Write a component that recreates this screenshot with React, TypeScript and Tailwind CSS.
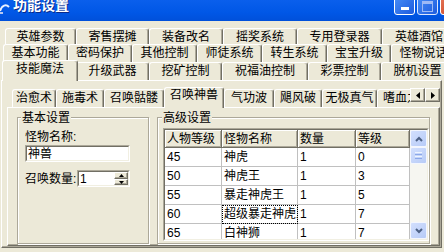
import React from 'react';

const row1 = [
  { t: '英雄参数', w: 'w-[71px]' },
  { t: '寄售摆摊', w: 'w-[73px]' },
  { t: '装备改名', w: 'w-[74px]' },
  { t: '摇奖系统', w: 'w-[74px]' },
  { t: '专用登录器', w: 'w-[85px]' },
  { t: '英雄酒馆', w: 'w-[74px]' },
];
const row2 = [
  { t: '基本功能', w: 'w-[65px]' },
  { t: '密码保护', w: 'w-[64px]' },
  { t: '其他控制', w: 'w-[65px]' },
  { t: '师徒系统', w: 'w-[65px]' },
  { t: '转生系统', w: 'w-[65px]' },
  { t: '宝宝升级', w: 'w-[64px]' },
  { t: '怪物说话', w: 'w-[65px]' },
];
const row3 = [
  { t: '升级武器', w: 'w-[73px]' },
  { t: '挖矿控制', w: 'w-[73px]' },
  { t: '祝福油控制', w: 'w-[86px]' },
  { t: '彩票控制', w: 'w-[73px]' },
  { t: '脱机设置', w: 'w-[73px]' },
];
const innerTabs = [
  { t: '治愈术', w: 'w-[44px]' },
  { t: '施毒术', w: 'w-[48px]' },
  { t: '召唤骷髅', w: 'w-[60px]' },
  { t: '召唤神兽', w: 'w-[60px]', sel: true },
  { t: '气功波', w: 'w-[50px]' },
  { t: '飓风破', w: 'w-[48px]' },
  { t: '无极真气', w: 'w-[55px]' },
  { t: '嗜血之力', w: 'w-[60px]' },
];

const tabBase =
  'shrink-0 flex justify-center bg-[#ECE9D8] border-l border-t border-r border-l-white border-t-white border-r-[#716F64] rounded-t-[3px] shadow-[inset_-1px_0_0_#ACA899] whitespace-nowrap overflow-hidden';

const cols = ['w-[57px]', 'w-[76px]', 'w-[58px]', 'w-[54px]'];
const headers = ['人物等级', '怪物名称', '数量', '等级'];
const rows = [
  ['45', '神虎', '1', '0'],
  ['50', '神虎王', '1', '3'],
  ['55', '暴走神虎王', '1', '5'],
  ['60', '超级暴走神虎王', '1', '7'],
  ['65', '白神狮', '1', '7'],
];

function Sunken({
  className,
  innerClassName,
  children,
}: {
  className: string;
  innerClassName: string;
  children?: React.ReactNode;
}) {
  return (
    <div className={`shrink-0 border border-t-[#ACA899] border-l-[#ACA899] border-r-white border-b-white ${className}`}>
      <div className={`w-full h-full border border-t-[#716F64] border-l-[#716F64] border-r-[#F1EFE2] border-b-[#F1EFE2] ${innerClassName}`}>
        {children}
      </div>
    </div>
  );
}

function Raised({ className, children }: { className: string; children?: React.ReactNode }) {
  return (
    <div
      className={`shrink-0 bg-[#ECE9D8] border border-t-white border-l-white border-r-[#716F64] border-b-[#716F64] shadow-[inset_-1px_-1px_0_#ACA899] flex items-center justify-center ${className}`}
    >
      {children}
    </div>
  );
}

function Chevron({ up }: { up: boolean }) {
  return (
    <svg width="8" height="6" viewBox="0 0 8 6">
      <polyline
        points={up ? '1,5 4,2 7,5' : '1,1 4,4 7,1'}
        fill="none"
        stroke="#4D6185"
        strokeWidth="2"
      />
    </svg>
  );
}

function LunaBtn({ className, children }: { className: string; children?: React.ReactNode }) {
  return (
    <div
      className={`shrink-0 rounded-[2px] border border-[#F3F6FE] bg-[linear-gradient(135deg,#D2DFFD,#B7CBF7)] flex items-center justify-center ${className}`}
    >
      {children}
    </div>
  );
}

export default function App() {
  return (
    <div className="w-[444px] h-[252px] overflow-hidden bg-[#ECE9D8] flex flex-col font-['Liberation_Sans','Noto_Sans_CJK_SC',sans-serif] text-[12px] leading-[14px] text-black select-none">
      {/* Title bar */}
      <div className="h-[21px] shrink-0 flex items-start bg-[linear-gradient(to_bottom,#0A5FEC,#0057E6_60%,#0050DA)]">
        <svg className="shrink-0 mt-[2px]" width="10" height="13" viewBox="0 0 10 13">
          <path d="M0 9 C2 3, 6 2, 9 5" fill="none" stroke="#EAF0FF" strokeWidth="2" />
          <path d="M0 11 L3 11" stroke="#B8C8F0" strokeWidth="2" />
        </svg>
        <span className="ml-[3px] -mt-[3px] text-[14px] leading-[16px] font-bold text-white [text-shadow:1px_1px_0_#0A2A8A] whitespace-nowrap">
          功能设置
        </span>
        <div className="ml-auto -mt-[6px] -mr-[17px] flex gap-[2px]">
          <div className="w-[21px] h-[21px] rounded-[3px] border border-white bg-[linear-gradient(135deg,#4A90F8,#1D5BDE)] flex items-end justify-center pb-[4px]">
            <div className="w-[8px] h-[3px] bg-white" />
          </div>
          <div className="w-[21px] h-[21px] rounded-[3px] border border-[#DCE6FC] bg-[linear-gradient(135deg,#4A90F8,#1D5BDE)] flex items-end justify-center pb-[2px]">
            <div className="w-[11px] h-[11px] border border-t-[3px] border-[#9DB9F5]" />
          </div>
          <div className="w-[21px] h-[21px] rounded-[3px] border border-white bg-[linear-gradient(135deg,#E77A5C,#C63A18)]" />
        </div>
      </div>

      <div className="flex flex-col pt-[7px]">
        {/* Tab row 1 */}
        <div className="flex h-[16px] pl-[5px] items-start">
          {row1.map((r) => (
            <div key={r.t} className={`${tabBase} ${r.w} h-[16px] pt-[1px]`}>
              {r.t}
            </div>
          ))}
        </div>
        {/* Tab row 2 */}
        <div className="flex h-[18px] pl-[3px] items-start">
          {row2.map((r) => (
            <div key={r.t} className={`${tabBase} ${r.w} h-[18px] pt-[1px]`}>
              {r.t}
            </div>
          ))}
        </div>
        {/* Tab row 3 */}
        <div className="flex h-[18px] pl-[4px] items-start">
          <div className={`${tabBase} relative z-10 w-[76px] h-[21px] -mt-[2px] -ml-[2px] -mr-[2px] pt-[1px]`}>
            技能魔法
          </div>
          {row3.map((r) => (
            <div key={r.t} className={`${tabBase} ${r.w} h-[18px] pt-[1px]`}>
              {r.t}
            </div>
          ))}
        </div>

        {/* Outer panel */}
        <div className="ml-[1px] w-[441px] h-[168px] shrink-0 border border-t-white border-l-white border-r-[#716F64] border-b-[#716F64] shadow-[inset_-1px_-1px_0_#ACA899] pt-[6px] pl-[5px]">
          <div className="w-[433px] flex flex-col">
            {/* inner tab strip */}
            <div className="flex h-[20px]">
              <div className="relative z-10 w-[412px] h-[21px] overflow-hidden flex items-start pl-[5px]">
                {innerTabs.map((r) =>
                  r.sel ? (
                    <div key={r.t} className={`${tabBase} ${r.w} h-[21px] pt-[0px]`}>
                      {r.t}
                    </div>
                  ) : (
                    <div key={r.t} className={`${tabBase} ${r.w} h-[18px] mt-[2px] pt-[1px]`}>
                      {r.t}
                    </div>
                  )
                )}
              </div>
              <div className="flex mt-[1px]">
                <Raised className="w-[15px] h-[14px]">
                  <svg width="4" height="7" viewBox="0 0 4 7">
                    <polygon points="4,0 4,7 0,3.5" fill="black" />
                  </svg>
                </Raised>
                <Raised className="w-[15px] h-[14px]">
                  <svg width="4" height="7" viewBox="0 0 4 7">
                    <polygon points="0,0 0,7 4,3.5" fill="black" />
                  </svg>
                </Raised>
              </div>
            </div>

            {/* inner panel */}
            <div className="h-[139px] shrink-0 border border-t-white border-l-white border-r-[#716F64] border-b-[#716F64] shadow-[inset_-1px_-1px_0_#ACA899] flex items-start pl-[9px]">
              {/* group 1 */}
              <div className="relative shrink-0 w-[132px] h-[127px] mt-[9px] border border-[#ACA899] shadow-[inset_1px_1px_0_#fff,1px_1px_0_#fff] pl-[7px] pt-[12px] flex flex-col">
                <span className="absolute -top-[7px] left-[3px] px-[1px] bg-[#ECE9D8] whitespace-nowrap">基本设置</span>
                <div className="h-[14px] whitespace-nowrap">怪物名称:</div>
                <Sunken className="mt-[1px] w-[105px] h-[17px] bg-white" innerClassName="flex items-center pl-[1px]">
                  神兽
                </Sunken>
                <div className="mt-[8px] flex items-center h-[17px]">
                  <span className="w-[52px] shrink-0 whitespace-nowrap">召唤数量:</span>
                  <Sunken className="w-[53px] h-[17px] bg-white" innerClassName="flex items-center pl-[1px]">
                    <span className="flex-1">1</span>
                    <div className="w-[14px] h-full flex flex-col">
                      <Raised className="w-[14px] h-[7px]">
                        <svg width="5" height="3" viewBox="0 0 5 3">
                          <polygon points="0,3 5,3 2.5,0" fill="black" />
                        </svg>
                      </Raised>
                      <Raised className="w-[14px] h-[6px]">
                        <svg width="5" height="3" viewBox="0 0 5 3">
                          <polygon points="0,0 5,0 2.5,3" fill="black" />
                        </svg>
                      </Raised>
                    </div>
                  </Sunken>
                </div>
              </div>

              {/* group 2 */}
              <div className="relative shrink-0 w-[273px] h-[127px] ml-[8px] mt-[9px] border border-[#ACA899] shadow-[inset_1px_1px_0_#fff,1px_1px_0_#fff] pl-[5px] pt-[10px] flex flex-col">
                <span className="absolute -top-[7px] left-[4px] px-[1px] bg-[#ECE9D8] whitespace-nowrap">高级设置</span>
                <Sunken className="w-[266px] h-[113px]" innerClassName="flex">
                  <div className="w-[245px] h-full overflow-hidden flex flex-col bg-white">
                    <div className="flex h-[18px] shrink-0">
                      {headers.map((h, i) => (
                        <div
                          key={h}
                          className={`${cols[i]} shrink-0 h-full pl-[2px] flex items-center bg-[#ECE9D8] border-r border-b border-r-[#716F64] border-b-[#716F64] shadow-[inset_1px_1px_0_#fff,inset_-1px_-1px_0_#ACA899] whitespace-nowrap`}
                        >
                          {h}
                        </div>
                      ))}
                    </div>
                    {rows.map((r, ri) => (
                      <div key={ri} className="flex h-[19px] shrink-0">
                        {r.map((c, ci) => (
                          <div
                            key={ci}
                            className={`${cols[ci]} shrink-0 h-full border-r border-b border-[#C0C0C0] pl-[2px] flex items-center whitespace-nowrap overflow-hidden ${
                              ri === 3 && ci === 1 ? 'outline outline-1 outline-dotted outline-black outline-offset-[-1px]' : ''
                            }`}
                          >
                            {c}
                          </div>
                        ))}
                      </div>
                    ))}
                  </div>
                  {/* scrollbar */}
                  <div className="w-[17px] h-full flex flex-col bg-[#F6F6F1]">
                    <LunaBtn className="w-[17px] h-[17px]">
                      <Chevron up />
                    </LunaBtn>
                    <LunaBtn className="w-[17px] h-[17px] flex-col gap-[1px]">
                      <div className="w-[7px] h-[1px] bg-[#EEF4FE]" />
                      <div className="w-[7px] h-[1px] bg-[#8CA8E8]" />
                      <div className="w-[7px] h-[1px] bg-[#EEF4FE]" />
                      <div className="w-[7px] h-[1px] bg-[#8CA8E8]" />
                    </LunaBtn>
                    <div className="flex-1" />
                    <LunaBtn className="w-[17px] h-[17px]">
                      <Chevron up={false} />
                    </LunaBtn>
                  </div>
                </Sunken>
              </div>
            </div>
          </div>
        </div>
      </div>
    </div>
  );
}
